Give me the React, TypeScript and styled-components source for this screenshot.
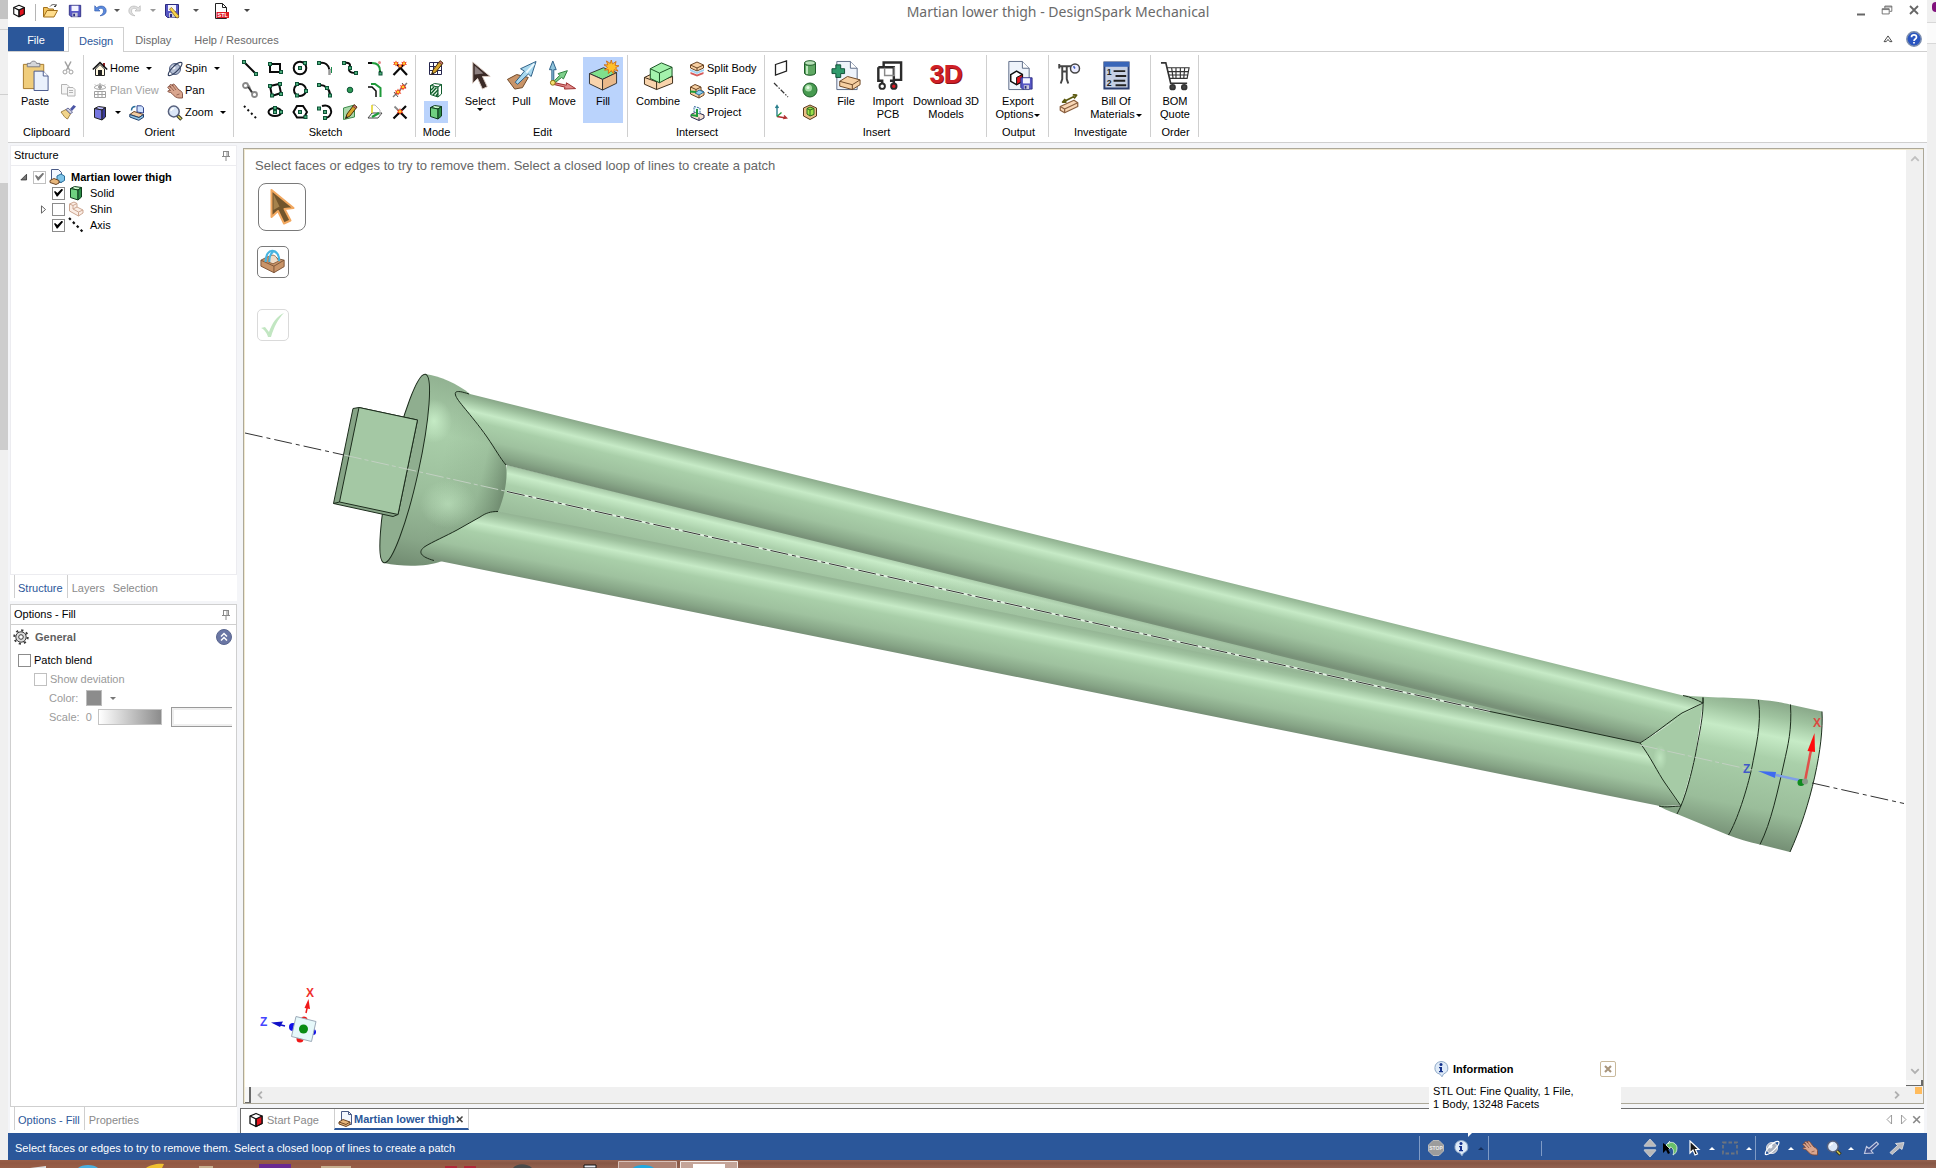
import React, { ReactNode } from "react";
import styled, { createGlobalStyle, css } from "styled-components";

const BLUE = "#2b579a";
const LINE = "#cfcfcf";
const PICK = "#bad3fc";

const Global = createGlobalStyle`
  *, *::before, *::after { box-sizing: border-box; }
  body { margin: 0; background: #f0f0f0; color: #000; font: 11px/13px "Liberation Sans", Arial, sans-serif; }
  button, input { font: inherit; color: inherit; }
  button { margin: 0; padding: 0; border: 0; background: none; white-space: nowrap; }
`;

/* ---------- page frame ---------- */

const Desktop = styled.div`
  display: flex;
  flex-direction: column;
  height: 100vh;
  overflow: hidden;
`;
const Screen = styled.div`
  display: flex;
  flex: 1;
  min-height: 0;
`;
const LeftEdge = styled.div`
  width: 8px;
  background: linear-gradient(#c4c4c4 0 19px, #f0f0f0 19px 29px, #cfcfcf 29px 30px, #f0f0f0 30px 94px, #cfcfcf 94px 95px,
    #f0f0f0 95px 183px, #cdcdcd 183px 450px, #f0f0f0 450px);
`;
const RightEdge = styled.div`
  width: 9px;
  background: linear-gradient(#f0f0f0 0 22px, #d8d8d8 22px 23px, #fbfbfb 23px 43px, #d8d8d8 43px 44px, #f0f0f0 44px);
  &::before {
    content: "";
    display: block;
    width: 4px;
    height: 10px;
    margin: 2px 0 0 5px;
    border-radius: 4px 0 0 4px;
    background: #80107c;
  }
`;
const AppWindow = styled.div`
  display: flex;
  flex-direction: column;
  flex: 1;
  min-width: 0;
  background: #fff;
`;

/* ---------- title bar ---------- */

const TitleBar = styled.header`
  display: flex;
  align-items: flex-start;
  height: 27px;
`;
const QuickAccess = styled.div`
  display: flex;
  align-items: center;
  height: 21px;
  width: 260px;
`;
const Slot = styled.button<{ $w: number }>`
  display: flex;
  flex: none;
  align-items: center;
  justify-content: center;
  width: ${(p) => p.$w}px;
`;
const QuickRule = styled.div`
  width: 1px;
  height: 17px;
  margin: 4px 5px 0 5px;
  background: #b5b5b5;
`;
const Title = styled.h1`
  flex: 1;
  margin: 0;
  padding-top: 2px;
  font: 14px/20px "Noto Sans", "Open Sans", sans-serif;
  text-align: center;
  color: #6a6a6a;
`;
const WindowButtons = styled.div`
  display: flex;
  align-items: center;
  height: 19px;
`;

/* ---------- tabs ---------- */

const TabRow = styled.nav`
  display: flex;
  align-items: stretch;
  height: 25px;
  border-bottom: 1px solid ${LINE};
`;
const FileTab = styled.button`
  width: 56px;
  margin-right: 4px;
  padding-top: 2px;
  background: ${BLUE};
  color: #fff;
`;
const Tab = styled.button<{ $on?: boolean }>`
  padding: 2px 12px 0 11px;
  color: ${(p) => (p.$on ? BLUE : "#6a6a6a")};
  ${(p) =>
    p.$on &&
    css`
      margin-bottom: -1px;
      padding: 2px 10px 0;
      border: 1px solid ${LINE};
      border-bottom: 0;
      background: #fff;
    `}
`;
const Grow = styled.div`
  flex: 1;
`;

/* ---------- ribbon ---------- */

const RibbonBar = styled.div`
  display: flex;
  height: 91px;
  padding: 3px 0 5px;
  border-bottom: 1px solid ${LINE};
`;
const GroupBox = styled.section<{ $w: number }>`
  display: flex;
  flex: none;
  flex-direction: column;
  width: ${(p) => p.$w}px;
  border-right: 1px solid ${LINE};
`;
const GroupBody = styled.div<{ $pad?: number }>`
  display: flex;
  flex: none;
  height: 70px;
  padding: 2px 0 0 ${(p) => p.$pad ?? 0}px;
`;
const GroupName = styled.h2`
  margin: 1px 0 0 2px;
  font: inherit;
  text-align: center;
`;
const BigButton = styled.button<{ $w: number; $on?: boolean }>`
  display: flex;
  flex: none;
  flex-direction: column;
  align-items: center;
  width: ${(p) => p.$w}px;
  height: 66px;
  padding-top: 3px;
  background: ${(p) => (p.$on ? PICK : "transparent")};
  text-align: center;
`;
const BigText = styled.span`
  margin-top: 4px;
`;
const SmallCol = styled.div<{ $w: number }>`
  display: grid;
  grid-auto-rows: 22px;
  align-content: start;
  justify-items: start;
  width: ${(p) => p.$w}px;
`;
const SmallRow = styled.div`
  display: flex;
  align-items: center;
  gap: 6px;
`;
const SmallButton = styled.button<{ $off?: boolean }>`
  display: flex;
  align-items: center;
  gap: 2px;
  height: 22px;
  padding: 1px 1px 0;
  color: ${(p) => (p.$off ? "#a3a3a3" : "#000")};
`;
const IconGrid = styled.div<{ $cols: number; $pitch: number; $row?: number }>`
  display: grid;
  grid-template-columns: repeat(${(p) => p.$cols}, ${(p) => p.$pitch}px);
  grid-auto-rows: ${(p) => p.$row ?? 22}px;
  align-content: start;
`;
const IconButton = styled.button<{ $on?: boolean }>`
  display: flex;
  align-items: center;
  justify-content: center;
  background: ${(p) => (p.$on ? PICK : "transparent")};
`;
const Caret = styled.span<{ $up?: boolean; $tone?: string; $gap?: number }>`
  display: inline-block;
  vertical-align: middle;
  margin-left: ${(p) => p.$gap ?? 0}px;
  border: 3px solid transparent;
  ${(p) => (p.$up ? "border-bottom-color" : "border-top-color")}: ${(p) => p.$tone ?? "#000"};
  ${(p) => (p.$up ? "border-top-width" : "border-bottom-width")}: 0;
`;

/* ---------- body ---------- */

const Body = styled.div`
  display: flex;
  flex: 1;
  min-height: 0;
  background: #f4f5f8;
`;
const Side = styled.aside`
  display: flex;
  flex-direction: column;
  width: 229px;
  padding: 2px 0 0 2px;
  background: #f4f5f8;
`;
const Panel = styled.section<{ $line: string; $grow?: boolean }>`
  display: flex;
  flex: ${(p) => (p.$grow ? "1" : "0 0 430px")};
  flex-direction: column;
  min-height: 0;
  background: #fff;
  border: 1px solid ${(p) => p.$line};
`;
const PanelHead = styled.header<{ $line: string }>`
  display: flex;
  align-items: center;
  justify-content: space-between;
  height: 20px;
  padding: 0 2px 0 3px;
  border-bottom: 1px solid ${(p) => p.$line};
`;
const PanelTitle = styled.h2`
  margin: 0;
  font: inherit;
`;
const PanelTabs = styled.div<{ $gap?: boolean }>`
  display: flex;
  flex: none;
  height: 26px;
  padding: 0 0 3px 4px;
  margin-bottom: ${(p) => (p.$gap ? 3 : 0)}px;
  background: #fff;
`;
const PanelTab = styled.button<{ $on?: boolean }>`
  padding: 3px 4px 0 ${(p) => (p.$on ? 3 : 4)}px;
  color: ${(p) => (p.$on ? BLUE : "#8a8a8a")};
  border: solid ${LINE};
  border-width: 0 ${(p) => (p.$on ? "1px 0 1px" : "0")};
`;
const Tree = styled.ul`
  margin: 3px 0 0;
  padding: 0;
  list-style: none;
`;
const TreeRow = styled.li<{ $indent: number; $bold?: boolean }>`
  display: flex;
  align-items: center;
  height: 16px;
  padding-left: ${(p) => p.$indent}px;
  font-weight: ${(p) => (p.$bold ? 700 : 400)};
`;
const Twisty = styled.span`
  display: flex;
  width: 15px;
`;
const TreeLabel = styled.label`
  display: flex;
  align-items: center;
`;
const TreeName = styled.span`
  margin-left: 6px;
`;
const Check = styled.input.attrs({ type: "checkbox" })<{ $soft?: boolean }>`
  appearance: none;
  flex: none;
  width: 13px;
  height: 13px;
  margin: 0 3px 0 0;
  border: 1px solid ${(p) => (p.$soft ? "#c0c0c0" : "#8c8c8c")};
  background: #fff;
  &:checked::before {
    content: "";
    display: block;
    width: 9px;
    height: 8px;
    margin: 1px;
    background: ${(p) => (p.$soft ? "#777" : "#000")};
    clip-path: polygon(0 40%, 12% 30%, 38% 56%, 88% 0, 100% 20%, 40% 100%, 30% 100%);
  }
`;
const Options = styled.div`
  display: grid;
  grid-template-columns: minmax(0, 1fr);
  gap: 3px;
  padding: 3px 0 0 2px;
  color: #8a8a8a;
`;
const OptionHead = styled.div`
  display: flex;
  align-items: center;
  justify-content: space-between;
  height: 18px;
  padding-right: 4px;
`;
const OptionName = styled.h3`
  display: flex;
  align-items: center;
  gap: 6px;
  margin: 0;
  font: bold 11px/13px "Liberation Sans", Arial, sans-serif;
  color: #5f5f5f;
`;
const OptionRow = styled.label<{ $indent: number; $strong?: boolean }>`
  display: flex;
  align-items: center;
  height: 16px;
  padding-left: ${(p) => p.$indent}px;
  color: ${(p) => (p.$strong ? "#000" : "#9a9a9a")};
`;
const OptionList = styled.div`
  display: grid;
  grid-template-columns: minmax(0, 1fr);
  gap: 3px;
  margin-top: 3px;
`;
const Swatch = styled.button`
  width: 16px;
  height: 16px;
  margin: 0 8px;
  border: 1px solid #bdbdbd;
  background: #8c8c8c;
`;
const Ramp = styled.div`
  flex: none;
  width: 64px;
  height: 16px;
  margin: 0 9px 0 6px;
  border: 1px solid #c4c4c4;
  background: linear-gradient(90deg, #fff, #8c8c8c);
`;
const ScaleBox = styled.input`
  flex: 1;
  min-width: 0;
  height: 20px;
  margin-right: 4px;
  border: 1px solid #9a9a9a;
  border-right: 0;
  box-shadow: inset 2px 2px #efefef, inset 0 -2px #efefef;
  background: #fff;
`;

/* ---------- work area ---------- */

const Work = styled.main`
  display: flex;
  flex: 1;
  flex-direction: column;
  min-width: 0;
  padding: 5px 3px 0 3px;
`;
const Frame = styled.div`
  display: grid;
  flex: 1;
  grid-template: minmax(0, 1fr) 16px / minmax(0, 1fr) 17px;
  min-height: 0;
  margin-left: 3px;
  border: 1px solid #aca899;
  background: #f0f0f0;
  box-shadow: inset 1px 1px #f1e9d0;
`;
const Viewport = styled.div`
  position: relative;
  margin: 1px 0 0 1px;
  padding: 8px 0 0 10px;
  background: #fff;
  overflow: hidden;
`;
const Scene = styled.svg`
  position: absolute;
  inset: 0;
  width: 100%;
  height: 100%;
`;
const Overlay = styled.div`
  position: relative;
  display: flex;
  flex-direction: column;
  align-items: flex-start;
`;
const Hint = styled.p`
  margin: 0 0 10px;
  font-size: 13px;
  line-height: 15px;
  color: #666;
`;
const ToolButton = styled.button<{ $big?: boolean; $faint?: boolean }>`
  display: flex;
  align-items: center;
  justify-content: center;
  width: ${(p) => (p.$big ? 48 : 32)}px;
  height: ${(p) => (p.$big ? 48 : 32)}px;
  margin: 0 0 ${(p) => (p.$big ? 15 : 31)}px ${(p) => (p.$big ? 3 : 2)}px;
  border: 1px solid ${(p) => (p.$faint ? "#dadada" : "#7a7a7a")};
  border-radius: ${(p) => (p.$big ? 8 : 5)}px;
  background: #fff;
`;
const VScroll = styled.div`
  display: flex;
  flex-direction: column;
  align-items: center;
  justify-content: space-between;
  padding: 4px 0 1px;
`;
const HScroll = styled.div`
  display: flex;
  align-items: center;
  justify-content: space-between;
  padding: 0 3px 0 1px;
`;
const ScrollEnd = styled.div<{ $row?: boolean }>`
  display: flex;
  flex-direction: ${(p) => (p.$row ? "row" : "column")};
  align-items: center;
  gap: 3px;
`;
const Nub = styled.div<{ $tall?: boolean }>`
  width: ${(p) => (p.$tall ? 6 : 17)}px;
  height: ${(p) => (p.$tall ? 16 : 6)}px;
  border: solid #696969;
  border-width: 0 2px 1px 0;
  background: #f7f7f7;
`;
const Corner = styled.div`
  display: flex;
  justify-content: flex-end;
  padding: 0 1px;
  &::before {
    content: "";
    width: 7px;
    height: 7px;
    background: #ffbb5c;
  }
`;
const DocTabs = styled.div`
  display: flex;
  align-items: stretch;
  height: 25px;
  margin: 4px 0 0;
  padding-bottom: 3px;
  border: solid #6e6e6e;
  border-width: 1px 0 0 1px;
  background: #fff;
`;
const DocTab = styled.button<{ $on?: boolean; $w: number }>`
  display: flex;
  align-items: center;
  gap: ${(p) => (p.$on ? 0 : 3)}px;
  width: ${(p) => p.$w}px;
  padding: 1px 0 0 ${(p) => (p.$on ? 3 : 7)}px;
  color: ${(p) => (p.$on ? BLUE : "#8a8a8a")};
  font-weight: ${(p) => (p.$on ? 700 : 400)};
  ${(p) =>
    p.$on &&
    css`
      border: 1px solid ${LINE};
      border-width: 0 1px 2px;
      border-bottom-color: ${BLUE};
    `}
`;

/* ---------- status bar ---------- */

const StatusBar = styled.footer`
  position: relative;
  display: flex;
  align-items: center;
  height: 27px;
  padding: 3px 16px 0 7px;
  background: ${BLUE};
  color: #fff;
`;
const StatusText = styled.span`
  flex: 1;
  padding-top: 1px;
`;
const StatusRule = styled.div<{ $short?: boolean; $before?: number; $after?: number }>`
  width: 1px;
  height: ${(p) => (p.$short ? 15 : 24)}px;
  margin: 0 ${(p) => p.$after ?? 1}px 0 ${(p) => p.$before ?? 0}px;
  background: #7f9bc6;
`;
const Balloon = styled.div`
  position: absolute;
  right: 306px;
  bottom: 27px;
  width: 192px;
  height: 78px;
  padding: 4px 5px 0 4px;
  background: #fff;
  color: #000;
`;
const BalloonTail = styled.div`
  position: absolute;
  left: 39px;
  bottom: -4px;
  border: 4px solid transparent;
  border-width: 4px 4px 0 0;
  border-top-color: #fff;
`;
const BalloonHead = styled.div`
  display: flex;
  align-items: center;
  gap: 4px;
  height: 20px;
  margin-bottom: 6px;
`;
const CloseBox = styled.button`
  display: flex;
  align-items: center;
  justify-content: center;
  width: 16px;
  height: 16px;
  margin-left: auto;
  border: 1px solid #c9b99c;
  border-radius: 2px;
`;
const BalloonText = styled.p`
  margin: 0;
`;
const Taskbar = styled.div`
  flex: none;
  height: 8px;
  background: linear-gradient(#94614f, #865644 40%, #946250);
`;

/* ---------- icons ---------- */

const Svg = styled.svg`
  display: block;
  flex: none;
  fill: none;
  stroke-linecap: butt;
`;
const Icon = ({ s = 16, box = 16, children }: { s?: number; box?: number; children: ReactNode }) => (
  <Svg width={s} height={s} viewBox={`0 0 ${box} ${box}`} aria-hidden="true">
    {children}
  </Svg>
);
const Node = ({ x, y }: { x: number; y: number }) => (
  <rect x={x} y={y} width="3" height="3" fill="#4fae7c" stroke="#0c5236" />
);
const Ink = ({ d, c = "#0a0a0a", w = 2 }: { d: string; c?: string; w?: number }) => <path d={d} stroke={c} strokeWidth={w} />;
const Burst = ({ x, y, r }: { x: number; y: number; r: number }) => (
  <g transform={`translate(${x} ${y}) scale(${r / 5})`}>
    <path d="M0-5 1.500-2 4.500-3 3 0l2 2.500-3.400-.3L0 5l-1.600-2.800L-5 2.500-3 0-4.500-3l3 1z" fill="#f0391b" />
    <circle r="2" fill="#ffd428" />
  </g>
);
const Pencil = () => (
  <g>
    <path d="M3.500 14.500 5 10 12 .800 15 3 8 12z" fill="#d8a72c" stroke="#4c300c" />
    <path d="m12 .800 3 2.200-1.200 1.600-3-2.200z" fill="#c87070" stroke="#4c300c" strokeWidth=".6" />
    <path d="m3.500 14.500 .8-2.600 1.700 1.300z" fill="#222" />
  </g>
);
const Block = ({ t, l, r, e = "#222" }: { t: string; l: string; r: string; e?: string }) => (
  <g stroke={e} strokeLinejoin="round">
    <path d="M2.500 3.500 6.500 1.500 13.500 2.500 10 5z" fill={t} />
    <path d="M2.500 3.500 10 5v10L2.500 12.500z" fill={l} />
    <path d="M10 5 13.500 2.500v9.500L10 15z" fill={r} />
  </g>
);
const Logo = () => (
  <g stroke="#111" strokeWidth="1.300" strokeLinejoin="round">
    <path d="M8 1.500 14 4v7.500l-6 3-6-3V4z" fill="#fff" />
    <path d="m8 7 6-3v7.500l-6 3z" fill="#e1131d" />
    <path d="m2 4 6 3v7" />
  </g>
);
const Planet = ({ dim }: { dim?: boolean }) => (
  <g>
    <circle cx="8" cy="8" r="5.500" fill={dim ? "#a9b0bd" : "#b3bed4"} stroke={dim ? "#e4e4e8" : "#525f80"} />
    <circle cx="6.500" cy="6.500" r="2" fill="#eef2fa" />
    <path
      d="M1.500 14.500C0 11 10 .500 14.500 1.500 17 4 6 15.500 1.500 14.500z"
      stroke={dim ? "#fff" : "#33405f"}
      strokeWidth="1.200"
    />
  </g>
);
const Hand = () => (
  <g>
    <path
      d="M.800 4.500C1 3 2.500 3 4 4.500L2.500 2.500C3 1 4.500 1.500 6 3L5.500 1.500C6.500.500 8 1.500 9.500 4L12 7c1.500.5 3 1.500 3.500 3.500V15H12c-2 0-5-1.500-7-4.500L3.500 9.500C2 9.500.500 9 1 7.800l2.500-.3z"
      fill="#d9a58e"
      stroke="#7d4a3a"
      strokeWidth=".9"
    />
    <path d="M4 4.500 7 8M6 3l3 4M9.500 12l3-1" stroke="#7d4a3a" strokeWidth=".7" />
  </g>
);
const Lens = () => (
  <g>
    <path d="m10 10 4.500 4.500" stroke="#3c3c28" strokeWidth="3.500" />
    <path d="m11 11 3 3" stroke="#d8cd4e" strokeWidth="1.400" />
    <circle cx="6.800" cy="6.500" r="5.400" fill="#dbe7f7" stroke="#56607c" strokeWidth="1.500" />
    <path d="M4 6a3 3 0 0 1 3-2.500" stroke="#fff" strokeWidth="1.500" />
  </g>
);
const Disk = () => (
  <g>
    <path d="M1.500 1.500h13v13h-11l-2-2z" fill="#5757c4" stroke="#2a2a80" />
    <path d="M4 2h8v6H4z" fill="#f4f4ff" />
    <path d="M5 10h6v4.500H5z" fill="#c9c9d8" />
    <path d="M6 11h2v3H6z" fill="#2a2a80" />
  </g>
);
const Page = () => (
  <g>
    <path d="M6 1.500h14l7 7v22H6z" fill="#eef3fb" stroke="#5d6b86" />
    <path d="M20 1.500v7h7" fill="#fff" stroke="#5d6b86" />
  </g>
);
const InfoMark = () => (
  <g>
    <path d="M8 .500A7 6.500 0 0 1 10.500 13L9 15.800l-2-2.600A7 6.500 0 0 1 8 .500z" fill="#dfebf8" stroke="#8fa9c8" />
    <circle cx="8" cy="3.500" r="1.500" fill="#15328c" />
    <path d="M6 6h3v4h1v1.200H6V10h1V7.200H6z" fill="#15328c" />
  </g>
);
const iconType = { fontFamily: "Liberation Sans, Arial, sans-serif", fontWeight: 700 };

const glyph: Record<string, ReactNode> = {
  logo: <Logo />,
  open: (
    <g stroke="#a2701c">
      <path d="M1.500 14V4.500h4l1 1.500h5v2" fill="#f3c45c" />
      <path d="M1.500 14 5 7.500h10.500L12 14z" fill="#ffdd8c" />
      <path d="M8 3.500C10 1 13 1 14 3m0 0V1m0 2.500h-2" stroke="#444" />
    </g>
  ),
  save: <Disk />,
  undo: (
    <path d="M2 2v6h6L6 6c3-2 6-1 6 2s-2 4-4 5.500c5-.5 7.500-3 7-6.500C14.500 2 8 1 4.300 4.300z" fill="#5b8ade" stroke="#2c56a8" strokeWidth=".7" />
  ),
  redo: (
    <path d="M14 2v6H8l2-2C7 4 4 5 4 8s2 4 4 5.500C3 13 .5 10.500 1 7 1.500 2 8 1 11.700 4.300z" fill="#e0e0e0" stroke="#b0b0b0" strokeWidth=".7" />
  ),
  saveAs: (
    <g>
      <Disk />
      <path d="m5.500 6 2-1.500L15 13l-1 2-2-.5z" fill="#f7d24a" stroke="#8a6410" strokeWidth=".7" />
    </g>
  ),
  stl: (
    <g>
      <path d="M2.500.500h7l4 4v11h-11z" fill="#fff" stroke="#222" />
      <path d="M9.500.500v4h4" stroke="#222" />
      <path d="M3.500 9H16v6H3.500z" fill="#e01b24" />
      <text x="9.700" y="14" textAnchor="middle" fontSize="5.500" fill="#fff" {...iconType}>STL</text>
    </g>
  ),
  cut: (
    <g stroke="#a0a0a0">
      <path d="M5 1.500 9.500 10M11 1.500 6.500 10" strokeWidth="1.500" />
      <circle cx="5" cy="12" r="2" />
      <circle cx="11" cy="12" r="2" />
    </g>
  ),
  copy: (
    <g stroke="#b4b4b4" fill="#f5f5f5">
      <path d="M1.500 2.500H7l2 2V12H1.500z" />
      <path d="M7.500 5.500H13l2 2v6.500H7.500z" />
      <path d="M9 8.500h4M9 10.500h4" />
    </g>
  ),
  brush: (
    <g>
      <path d="M1 8 6 5.500 10.500 10 7.500 15C5 14 4 12 1 8z" fill="#f1d48a" stroke="#8b6b2c" strokeWidth=".8" />
      <path d="M6 5.500 8 4l4.500 4-2 2z" fill="#cfcfe0" stroke="#444a80" strokeWidth=".8" />
      <path d="m10 5 3.500-4L16 2.500 12 7z" fill="#4b55a5" />
    </g>
  ),
  home: (
    <g>
      <path d="M11 2h2v4h-2z" fill="#8c1f1f" />
      <path d="M3.500 8v6.500h9V8L8 3.500z" fill="#fff8e0" stroke="#222" />
      <path d="M.800 8.500 8 1.500l7.200 7" stroke="#111" strokeWidth="1.600" />
      <path d="M6 9h4v5.500H6z" fill="#222" />
    </g>
  ),
  plan: (
    <g stroke="#a0a0a0">
      <path d="M2 4.500C5 1 11 1 14 4.500 11 7 5 7 2 4.500zM2.500 8.500h11v6h-11zM2.500 11.500h11M6 8.500v6M10 8.500v6" />
      <circle cx="8" cy="4" r="1.500" fill="#a0a0a0" />
      <path d="M3 1.500l1 1M8 0v1.500M13 1.500l-1 1" />
    </g>
  ),
  blueBlock: <Block t="#b9b9ff" l="#7676e0" r="#3c3c9c" />,
  greenBlock: <Block t="#c9f7c9" l="#6fd080" r="#2c8c46" e="#0f3d1c" />,
  hatchBlock: (
    <g>
      <Block t="#fff" l="#e8fbe8" r="#fff" e="#0f5d2c" />
      <path d="m3 8 3-3M3 11.500 8.500 5.500M5 13l5-5M8 14l2-2.500" stroke="#0f5d2c" strokeWidth="1.400" />
    </g>
  ),
  ghostStep: (
    <g stroke="#cda792" fill="#fbeee6" strokeLinejoin="round">
      <path d="M1.500 3 6 1l3 1.500V6l6 3v3l-4.500 3L1.500 10z" />
      <path d="M1.500 3 5 4.500v3.500l5.500 3V15M5 4.500 9 2.500M5 8l4-2M10.500 11 15 9" />
    </g>
  ),
  axisDots: <path d="m1 1 14 14" stroke="#111" strokeWidth="2.200" strokeDasharray="2.500 3" />,
  dotLine: <path d="m2 2 13 13" stroke="#111" strokeWidth="2" strokeDasharray="2 3" />,
  axisThin: <path d="m1 1 14 14" stroke="#333" strokeWidth="1.200" strokeDasharray="5 1.500 1.500 1.500" />,
  snap: (
    <g strokeLinejoin="round">
      <path d="M.800 9.500 5 6.500l9.500 3-4.500 3z" fill="#f0cda4" stroke="#6b4524" />
      <path d="M.800 9.500v2.500l9 3.300 4.700-3V9.500L10 12.500z" fill="#8fc4e4" stroke="#1f3f6c" />
      <path d="M8 .800h4.500l2 2V8L8 7z" fill="#cfe2ff" stroke="#34468c" />
      <path d="M2.500 5.500c0-3 2-4 4-4" stroke="#2a6f9c" strokeWidth="1.500" />
    </g>
  ),
  spin: <Planet />,
  hand: <Hand />,
  lens: <Lens />,

  line: (<g><Ink d="m3 3 10 10" /><Node x={.5} y={.5} /><Node x={12.5} y={12.5} /></g>),
  rect: (<g><Ink d="M3 4h10v8H3z" /><Node x={1.5} y={2.5} /><Node x={12.5} y={10.5} /></g>),
  circle: (<g><circle cx="8" cy="8" r="6.300" stroke="#0a0a0a" strokeWidth="2" /><Node x={6.5} y={6.5} /><Node x={11.5} y={1.5} /></g>),
  tanArc: (<g><Ink d="M3 3c5-1 9 2 9.500 7" /><path d="M12.500 9v6" stroke="#9a9a9a" strokeWidth="2.500" /><path d="M14.500 7v6" stroke="#1a8a4a" /><Node x={.5} y={1.5} /></g>),
  spline: (<g><Ink d="M2 3c5-1 7 1 5.500 4S7 13 14 13" /><Node x={.5} y={1.5} /><Node x={6.5} y={6.5} /><Node x={12.5} y={11.5} /></g>),
  fillet: (<g><Ink d="M1 3h4M13 10v5" /><Ink d="M5 3c5 0 8 3 8 8" c="#1f9a3a" /><circle cx="12.500" cy="2.500" r="1.500" fill="#e58a8a" /><Node x={12} y={12} /></g>),
  trim: (<g><Ink d="M1.500 15 13 3M4 3l11 12" w={2.200} /><Burst x={4} y={3.500} r={3} /><Burst x={12} y={3.500} r={3} /><Burst x={8} y={6} r={2.500} /></g>),
  chain: (<g stroke="#8a8a8a" strokeWidth="1.800"><circle cx="3.500" cy="3.500" r="2.500" /><circle cx="12.500" cy="12.500" r="2.500" /><path d="M6 3c3 2 1 6 4.500 8" strokeWidth="2" /><path d="M6 5l4 5" stroke="#333" /></g>),
  rect3: (<g><Ink d="m3 4 9-2 2 9-9 3z" /><Node x={1.5} y={2.5} /><Node x={11.5} y={.5} /><Node x={12.5} y={10.5} /><Node x={3.5} y={12} /></g>),
  circle3: (<g><circle cx="8" cy="8" r="6" stroke="#0a0a0a" strokeWidth="2" /><Node x={3.5} y={.5} /><Node x={12.5} y={7.5} /><Node x={3.5} y={12} /></g>),
  arc3: (<g><Ink d="M3 3c5 0 10 4 10 10" /><Node x={.5} y={1.5} /><Node x={8.5} y={4.500} /><Node x={11.500} y={12} /></g>),
  dot: <circle cx="8" cy="8" r="2.800" fill="#2f9a55" stroke="#0c5236" />,
  offset: (<g><Ink d="M1 5h4l4 4v6" w={1.5} /><Ink d="M4 2h4l5.500 4v9" c="#1f9a3a" /></g>),
  split: (<g><Ink d="M1 15 15 1" c="#777" w={1.5} /><Ink d="m2 10 4 5M10 1l4 5" c="#555" w={1} /><Burst x={6} y={10} r={3.400} /><Burst x={11} y={5} r={3.400} /></g>),
  ellipse: (<g><ellipse cx="8" cy="8" rx="6.500" ry="4" stroke="#0a0a0a" strokeWidth="2" /><Node x={6.500} y={2.500} /><Node x={6.500} y={6.500} /><Node x={12.500} y={6.500} /></g>),
  polygon: (<g><Ink d="M5 2h6l4 6-3 5.500H5L1.500 8z" /><Node x={6.500} y={6.500} /><Node x={12} y={11.500} /></g>),
  sweep: (<g><Ink d="M5 2c6-2 10 2 9 7-1 3-3 5-6 5" /><Node x={.5} y={3} /><Node x={6.500} y={6.500} /><Node x={6.500} y={12.500} /></g>),
  planePen: (<g><path d="M1.500 4l11-3v12l-11 2.500z" fill="#a9d8a9" stroke="#3f8a4c" /><Pencil /></g>),
  project: (<g><path d="M1 14 5 9h10l-4 5z" stroke="#444" /><path d="M5 1h3l5 5v5" stroke="#b8b8b8" /><path d="M5 1v8" stroke="#e0d020" strokeWidth="1.500" /><path d="m5 13 7-4" stroke="#1f9a3a" strokeWidth="2.500" /></g>),
  cross: (<g><Ink d="m8 8 6.500 6.500M1.500 14.500 14 2" w={2.200} /><Ink d="m2.500 2.500 5 5" c="#888" w={1.800} /><Burst x={8} y={7.500} r={3.400} /></g>),

  gridPen: (<g><path d="M1.500 2.500h12v12h-12zM1.500 6.500h12M1.500 10.500h12M5.500 2.500v12M9.500 2.500v12" stroke="#26264e" /><Pencil /></g>),

  splitBody: (
    <g strokeLinejoin="round">
      <path d="M1.500 4 8 1l6.500 3v3L8 10 1.500 7z" fill="#f6cfa2" stroke="#6b4524" />
      <path d="m1.500 4 6.500 3 6.500-3M8 7v3" stroke="#6b4524" />
      <path d="m1 8 7 3 7-3v2l-7 3-7-3z" fill="#9fd3f2" />
      <path d="m1.500 11 6.500 2.500 6.500-2.500v2L8 15.500 1.500 13z" fill="#d65a5a" />
    </g>
  ),
  splitFace: (
    <g strokeLinejoin="round" stroke="#6b4524">
      <path d="M1.500 4 6 1.500 12 4v3l3 2v3l-5 3-8.500-4z" fill="#f6cfa2" />
      <path d="m6 10 4-3 5 2-5 3z" fill="#8fd0f0" stroke="#2a6f9c" />
      <path d="M1.500 4 7 6.500 12 4M7 6.500V9M10 12v3" />
      <path d="M1 8.500 7 9" stroke="#1f9a3a" strokeWidth="2" />
    </g>
  ),
  projectTo: (
    <g strokeLinejoin="round">
      <path d="M2 9.500 7 7l8 3v3l-5 2.500-8-3.500z" fill="#f6e0d0" stroke="#2a2a50" />
      <path d="M5 1.500 11 3v6L5 7z" fill="#e8f6ff" stroke="#3c6c9c" strokeDasharray="2 1" />
      <path d="M8 4v8M2 10l7 1" stroke="#1f9a3a" strokeWidth="2" />
      <path d="M10 12.500V15" stroke="#2a2a50" />
    </g>
  ),
  plane: <path d="M2.500 4.500 13.500 1v10l-11 4z" fill="#fff" stroke="#222" strokeWidth="1.300" />,
  cylinder: (
    <g stroke="#1d5c28">
      <path d="M2.500 3v10c0 3 11 3 11 0V3z" fill="#5fa863" />
      <ellipse cx="8" cy="3" rx="5.500" ry="2.300" fill="#b9e2b9" />
      <path d="M5 6v8" stroke="#bfe8bf" strokeWidth="2" />
    </g>
  ),
  sphere: (
    <g>
      <circle cx="8" cy="8" r="7" fill="#479a50" stroke="#1d5c28" />
      <circle cx="6.500" cy="6" r="3.500" fill="#a5dba5" />
      <circle cx="6" cy="5.500" r="1.500" fill="#e4fae4" />
    </g>
  ),
  originAxes: (
    <g strokeWidth="1.400">
      <path d="M4 12.500V2M2.500 4 4 1.500 5.500 4" stroke="#2a7f8c" />
      <path d="M4 12.500l9 1.500M11 11.500l2.500 2.500-3.500.5" stroke="#b03030" />
      <path d="m4 12.500 4.500-4" stroke="#1f9a3a" />
    </g>
  ),
  shell: (
    <g strokeLinejoin="round">
      <path d="M8 1 14.500 4v8L8 15.500 1.500 12V4z" fill="#e9be86" stroke="#5a3a1c" />
      <path d="M5 4.500 8 3l4 1.500v6L8 12 5 10z" fill="#9be04a" stroke="#2c6a1c" />
      <path d="M8 6v6M5 4.500 8 6l4-1.500" stroke="#2c6a1c" />
    </g>
  ),
  caliper: (
    <g stroke="#444">
      <path d="M1 3.500h10M3.500 3v9l-1 3M6.500 3v9l1 3M1.500 2v3M3.500 7h3" strokeWidth="1.300" />
      <circle cx="12" cy="5" r="3" fill="#eef" />
      <path d="m12 5-1-1.500" stroke="#3c5cc0" />
    </g>
  ),
  measure: (
    <g strokeLinejoin="round">
      <path d="M1 10 12 5l3 2v3L4.500 15 1 13z" fill="#f9d6b4" stroke="#8a6040" />
      <path d="M1 10l3.500 2L15 7M4.500 12v3" stroke="#8a6040" />
      <path d="m4 6 8-4M11 .500 14 1l-2 2.500M5 4 3 6.500h3" stroke="#5c5a10" strokeWidth="1.500" />
    </g>
  ),
  doc: (
    <g>
      <path d="M3.500.500h7l3 3v10h-10z" fill="#f3f7ff" stroke="#4a5a86" />
      <path d="M10.500.500v3h3" stroke="#4a5a86" />
      <path d="M1 11 5 8.500l7 2.500v2.500l-4 2-7-2.500z" fill="#e8b77c" stroke="#6b4524" strokeLinejoin="round" />
      <path d="m1 11 7 2.500 4-2.500" stroke="#6b4524" />
    </g>
  ),
  docTree: (
    <g>
      <path d="M2.500.500h7l3 3v10h-10z" fill="#f3f7ff" stroke="#4a5a86" />
      <path d="M8 7l4-2 3.500 2v4.500L12 13.500 8 11.500z" fill="#7fc4e8" stroke="#2a6f9c" />
      <path d="M1 11.500 5 9.500l5 2V14l-3 1.500-6-2z" fill="#e8b77c" stroke="#6b4524" strokeLinejoin="round" />
    </g>
  ),
  gear: (
    <g stroke="#3c3c3c">
      <circle cx="8" cy="8" r="6.700" strokeWidth="2" strokeDasharray="2.200 3.060" />
      <circle cx="8" cy="8" r="5.200" fill="#dcdcdc" />
      <circle cx="8" cy="8" r="2.300" fill="#fff" />
    </g>
  ),
  collapse: (
    <g>
      <circle cx="8" cy="8" r="7.500" fill="#6a76a4" stroke="#5a668f" />
      <path d="m5 7.500 3-3 3 3M5 11.500l3-3 3 3" stroke="#fff" strokeWidth="1.500" />
    </g>
  ),
  pin: <path d="M5.500 3v5M10.500 3v5M5.500 3.500h5M9 3v5M4 8.500h8M8 9v4" stroke="#8a8a8a" />,
  help: (
    <g>
      <circle cx="8" cy="8" r="7.200" fill="#2a55c0" stroke="#7d8fae" strokeWidth="1.500" />
      <path d="M5.500 6.200c0-3 5-3 5 0 0 1.800-2.500 1.800-2.500 3.800M8 11v1.500" stroke="#fff" strokeWidth="1.700" />
    </g>
  ),
  minimise: <path d="M4 12.500h8" stroke="#666" strokeWidth="2" />,
  restore: <path d="M2.500 6.500h8v6h-8zM2.500 7.500h8M5.500 6V3.500h8v6H11M5.500 4.500h8" stroke="#666" />,
  close: <path d="m4 4 8 8M12 4l-8 8" stroke="#666" strokeWidth="1.800" />,
  fold: <path d="M3.500 11 8 4.500l4.500 6.500H10L8 8.500 6 11z" stroke="#333" />,
  closeSmall: <path d="m3 3 9 9M12 3l-9 9" stroke="#8a8a8a" strokeWidth="2.200" />,
  closeTab: <path d="m3 4 9 9M12 4l-9 9" stroke="#444" strokeWidth="2.400" />,
  closeTan: <path d="m4 4 8 8M12 4l-8 8" stroke="#a8957c" strokeWidth="2.800" />,
  left: <path d="m10.500 2.500-5.500 5.500 5.500 5.500z" stroke="#888" />,
  right: <path d="m5.500 2.500 5.500 5.500-5.500 5.500z" stroke="#888" />,
  chevL: <path d="M10.500 3.500 6 8l4.500 4.500" stroke="#b0b0b0" strokeWidth="2.400" />,
  chevR: <path d="m5.500 3.500 4.500 4.500-4.500 4.500" stroke="#b0b0b0" strokeWidth="2.400" />,
  chevU: <path d="m3 10.500 5-5 5 5" stroke="#c0c0c0" strokeWidth="2.400" />,
  chevD: <path d="m3 5.500 5 5 5-5" stroke="#b0b0b0" strokeWidth="2.400" />,
  twistOpen: <path d="M10.500 4v7h-7z" fill="#777" stroke="#333" />,
  twistShut: <path d="m5.500 3.500 5 4.500-5 4.500z" stroke="#444" />,
  info: <InfoMark />,
  stop: (
    <g>
      <path d="M5 .500h6L15.500 5v6L11 15.500H5L.500 11V5z" fill="#9c9c9c" stroke="#b8b8b8" />
      <text x="8" y="10" textAnchor="middle" fontSize="5" fill="#eee" {...iconType}>STOP</text>
    </g>
  ),
  spinner: (
    <g fill="#b9b9b9" stroke="#e6e6e6" strokeWidth=".6">
      <path d="M8 0l5 5.500v1H3v-1zM8 16l5-5.500v-1H3v1z" />
    </g>
  ),
  turn: (
    <g>
      <path d="M1 3v10l3-3 2 4 2-1-2-4h4z" fill="#000" />
      <path d="M6 4C10 0 15 4 15 8s-2 6-4 7c1-3 1-7-3-8v2L4 5l4-4z" fill="#6ac06a" stroke="#e4f4e4" strokeWidth=".8" />
    </g>
  ),
  cursor: <path d="M4 1v12l3-3 2 5 2.500-1-2-4.500H13z" fill="#1a1a1a" stroke="#fff" strokeWidth="1.200" />,
  marquee: <path d="M1 2.500h14v11H1z" stroke="#6c747f" strokeWidth="1.800" strokeDasharray="3.500 2" />,
  planetDim: <Planet dim />,
  arrowSW: (
    <path d="M1.500 13.500 3.500 6.500 6 8.500 13.500 2l2 2L8 10.800 10 13z" fill="#3c5290" stroke="#c4cce4" strokeWidth="1.100" />
  ),
  arrowNE: (
    <path d="M15 2.500 13 9.500 10.800 7.800 3 14.500l-2-2L8.500 5.500 6.500 3.500z" fill="#b9b9bd" stroke="#e8e8e8" strokeWidth=".8" />
  ),

  paste: (
    <g>
      <path d="M3.500 4.500h21v25h-21z" fill="#f0cd7c" stroke="#a57a2c" />
      <path d="M7.500 7V3.500H11c0-3 6-3 6 0h3.500V7z" fill="#d4d6da" stroke="#7c7c84" />
      <path d="M14.500 11.500H24l5 5v15H14.500z" fill="#eaf1fc" stroke="#48598c" />
      <path d="M24 11.500v5h5" fill="#fff" stroke="#48598c" />
    </g>
  ),
  select: (
    <g>
      <path d="M8 2v22l5-5 5 11 5-2.500L18 17h8z" fill="#3a2a26" stroke="#d8c8c0" />
      <path d="M10 6v9l9-1z" fill="#8d8080" />
    </g>
  ),
  pull: (
    <g strokeLinejoin="round">
      <path d="M1.500 20 11 15l12 3-6 10.500L9 30z" fill="#c99468" stroke="#6b4524" />
      <path d="M31 1.500 26 17l-3-2.500L12 25l-2.500-2L19 11.500l-4-2.500z" fill="#a9d8ee" stroke="#2c5f86" />
      <path d="M29 4 21 13" stroke="#eefaff" strokeWidth="2" />
    </g>
  ),
  move: (
    <g strokeLinejoin="round">
      <path d="M5 22V10H2.500L6 1l3.500 9H7v12z" fill="#8fc4dc" stroke="#2c5f86" />
      <path d="m7 22 6-6-1.500-2L21 11l-4 8.500-2-1.500L9 23z" fill="#7fd08c" stroke="#2c7f3c" />
      <path d="m6 23 14 3v-2.500l9.500 6-11.500.5.500-2L6 25z" fill="#e08a8a" stroke="#9c2c2c" />
      <circle cx="6" cy="23.500" r="2.500" fill="#f4e070" stroke="#8a6f10" />
    </g>
  ),
  fill: (
    <g stroke="#333" strokeLinejoin="round">
      <path d="M1.500 14 16 8l13.500 5L15 20z" fill="#7fe08c" />
      <path d="M1.500 14 15 20v11L1.500 24.500z" fill="#f9d4ac" />
      <path d="M15 20l14.500-7v11L15 31z" fill="#eab98a" />
      <path d="M24 0l1.300 4L29 1.500 28 5.500l4 .5-3.500 2L31 11.500 27 10l-.5 4.500L24 11l-3 3v-4l-4 .5 3-3L16.500 5l4 0L19 1l4 2.500z" fill="#ffc02c" stroke="#c8600c" strokeWidth=".8" />
    </g>
  ),
  combine: (
    <g stroke="#3b2a18" strokeLinejoin="round">
      <path d="M1.500 18 12 13l18.500 4v7L14 30.500 1.500 25z" fill="#f9d4ac" />
      <path d="M1.500 18 14 22.500v8M14 22.500 30.500 17" />
      <path d="M7.500 9 19 3l11 4.500v9L17 23.500 7.500 19z" fill="#a4f2ac" stroke="#174f20" />
      <path d="M7.500 9 17 13.500v10M17 13.500 30 7.500" stroke="#174f20" />
    </g>
  ),
  insertFile: (
    <g>
      <Page />
      <path d="M5 5h5v4h4v5h-4v4H5v-4H1V9h4z" fill="#2f9a6c" stroke="#0f4f38" />
      <path d="M9 22 17 17l13 3.500v5L22 30.500 9 27z" fill="#f6cfa2" stroke="#6b4524" strokeLinejoin="round" />
      <path d="m9 22 13 3.500 8-5M22 25.500v5" stroke="#6b4524" />
    </g>
  ),
  pcb: (
    <g stroke="#2b2b2b" strokeWidth="2.500">
      <path d="M11 7V2.500h18v18H22M5.500 7.500h16v14h-4M5.500 7.500v14h4v3.500M21.500 21.500V25" />
      <path d="M12 8v8h10V7" stroke="#8a8a8a" strokeWidth="1.500" />
      <circle cx="9.500" cy="27" r="2.800" fill="#fff" strokeWidth="2" />
      <circle cx="21.500" cy="27" r="2.800" fill="#e01b24" strokeWidth="2" />
    </g>
  ),
  exportOut: (
    <g>
      <Page />
      <path d="m8 15 6-3.500 6 3.500v7l-6 3.500-6-3.500z" fill="#fff" stroke="#111" strokeWidth="1.500" />
      <path d="m14 18 6-3v7l-6 3.500z" fill="#e1131d" stroke="#111" />
      <g transform="translate(17 17) scale(.9)"><Disk /></g>
    </g>
  ),
  bill: (
    <g>
      <path d="M3.500 2.500h25v27h-25z" fill="#c6d0e4" stroke="#2c3f70" strokeWidth="2" />
      <path d="M3 2h26v5H3z" fill="#3a66b8" />
      <path d="M13 11.500h12M15 16.500h11M13 21.500h12M15 26h11" stroke="#222" strokeWidth="2" />
      <text x="6" y="15" fontSize="9" fill="#222" {...iconType}>1</text>
      <text x="6" y="27" fontSize="9" fill="#222" {...iconType}>2</text>
    </g>
  ),
  cart: (
    <g stroke="#333" strokeWidth="1.700">
      <path d="M1 3h5l5 21h17" />
      <path d="M7 8h23l-2 11H10M8 12h21M9 15.500h20M12 8l1.500 11M16.500 8v11M21 8v11M25.500 8 24.500 19" strokeWidth="1.200" />
      <circle cx="13" cy="28" r="2.500" fill="#444" />
      <circle cx="25" cy="28" r="2.500" fill="#444" />
    </g>
  ),
  bigCursor: (
    <g strokeLinejoin="round">
      <path d="M8.500 2v27l6.500-6 6 12.500 6.500-3-6-11.500 9-1z" fill="#72552c" stroke="#f2a860" strokeWidth="2" />
      <path d="M10.500 6v16l6-3.500z" fill="#a5824c" />
    </g>
  ),
  guide: (
    <g strokeLinejoin="round">
      <path d="M1 12 9 8l17 4v7l-11 6.500L1 18.500z" fill="#c99468" stroke="#7a5236" />
      <path d="M1 12l14 6.500L26 12M15 18.500v7" stroke="#7a5236" />
      <path d="M9 14C9 6 16 3 20 13l-6 3z" fill="#f0dcc8" stroke="#8a6040" />
      <path d="M6 14C6 5 10 2 13 2c5 0 8 5 7.500 11M10 14c0-5 1-9 4-11" stroke="#48b4e0" strokeWidth="2.200" />
    </g>
  ),
  tick: <path d="M2 17l4-1 4 5C13 12 18 5 25 2c-6 6-10 14-13 24H9C8 22 5 18 2 17z" fill="#c2e6c2" />,
};

const G = ({ n, s }: { n: string; s?: number }) => (
  <Icon s={s} box={16}>
    {glyph[n]}
  </Icon>
);
const G32 = ({ n }: { n: string }) => (
  <Icon s={31} box={32}>
    {glyph[n]}
  </Icon>
);
const ThreeD = styled.strong`
  height: 31px;
  font: 900 26px/28px "Liberation Sans", Arial, sans-serif;
  color: #cf1f26;
  text-shadow: 1px 1px #8c1015;
`;

/* ---------- ribbon parts ---------- */

const Group = ({ name, w, pad, children }: { name: string; w: number; pad?: number; children: ReactNode }) => (
  <GroupBox $w={w} aria-label={name}>
    <GroupBody $pad={pad}>{children}</GroupBody>
    <GroupName>{name}</GroupName>
  </GroupBox>
);

const sketchTools = [
  "line", "rect", "circle", "tanArc", "spline", "fillet", "trim",
  "chain", "rect3", "circle3", "arc3", "dot", "offset", "split",
  "dotLine", "ellipse", "polygon", "sweep", "planePen", "project", "cross",
];
const insertTools = ["plane", "cylinder", "axisThin", "sphere", "originAxes", "shell"];

const Ribbon = () => (
  <RibbonBar>
    <Group name="Clipboard" w={76} pad={7}>
      <BigButton $w={40}>
        <G32 n="paste" />
        <BigText>Paste</BigText>
      </BigButton>
      <IconGrid $cols={1} $pitch={26}>
        {["cut", "copy", "brush"].map((n) => (
          <IconButton key={n} aria-label={n}><G n={n} /></IconButton>
        ))}
      </IconGrid>
    </Group>
    <Group name="Orient" w={150} pad={7}>
      <SmallCol $w={75}>
        <SmallButton><G n="home" />Home<Caret $gap={5} /></SmallButton>
        <SmallButton $off><G n="plan" />Plan View</SmallButton>
        <SmallRow>
          <SmallButton aria-label="Display style"><G n="blueBlock" /><Caret $gap={5} /></SmallButton>
          <SmallButton aria-label="Snap view"><G n="snap" /></SmallButton>
        </SmallRow>
      </SmallCol>
      <SmallCol $w={66}>
        <SmallButton><G n="spin" />Spin<Caret $gap={5} /></SmallButton>
        <SmallButton><G n="hand" />Pan</SmallButton>
        <SmallButton><G n="lens" />Zoom<Caret $gap={5} /></SmallButton>
      </SmallCol>
    </Group>
    <Group name="Sketch" w={182} pad={3}>
      <IconGrid $cols={7} $pitch={25}>
        {sketchTools.map((n) => (
          <IconButton key={n} aria-label={n}><G n={n} /></IconButton>
        ))}
      </IconGrid>
    </Group>
    <Group name="Mode" w={40} pad={8}>
      <IconGrid $cols={1} $pitch={24}>
        {["gridPen", "hatchBlock", "greenBlock"].map((n) => (
          <IconButton key={n} aria-label={n} $on={n === "greenBlock"}><G n={n} /></IconButton>
        ))}
      </IconGrid>
    </Group>
    <Group name="Edit" w={172} pad={3}>
      <BigButton $w={42}>
        <G32 n="select" />
        <BigText>Select</BigText>
        <Caret />
      </BigButton>
      <BigButton $w={41}><G32 n="pull" /><BigText>Pull</BigText></BigButton>
      <BigButton $w={41}><G32 n="move" /><BigText>Move</BigText></BigButton>
      <BigButton $w={40} $on><G32 n="fill" /><BigText>Fill</BigText></BigButton>
    </Group>
    <Group name="Intersect" w={137}>
      <BigButton $w={60}><G32 n="combine" /><BigText>Combine</BigText></BigButton>
      <SmallCol $w={76}>
        <SmallButton><G n="splitBody" />Split Body</SmallButton>
        <SmallButton><G n="splitFace" />Split Face</SmallButton>
        <SmallButton><G n="projectTo" />Project</SmallButton>
      </SmallCol>
    </Group>
    <Group name="Insert" w={222} pad={1}>
      <IconGrid $cols={2} $pitch={29}>
        {insertTools.map((n) => (
          <IconButton key={n} aria-label={n}><G n={n} /></IconButton>
        ))}
      </IconGrid>
      <BigButton $w={44}><G32 n="insertFile" /><BigText>File</BigText></BigButton>
      <BigButton $w={40}><G32 n="pcb" /><BigText>Import<br />PCB</BigText></BigButton>
      <BigButton $w={76}><ThreeD>3D</ThreeD><BigText>Download 3D<br />Models</BigText></BigButton>
    </Group>
    <Group name="Output" w={62} pad={2}>
      <BigButton $w={58}><G32 n="exportOut" /><BigText>Export<br />Options<Caret $gap={1} /></BigText></BigButton>
    </Group>
    <Group name="Investigate" w={102} pad={6}>
      <IconGrid $cols={1} $pitch={28} $row={31}>
        <IconButton aria-label="Measure mass"><G n="caliper" s={24} /></IconButton>
        <IconButton aria-label="Measure"><G n="measure" s={20} /></IconButton>
      </IconGrid>
      <BigButton $w={66}><G32 n="bill" /><BigText>Bill Of<br />Materials<Caret $gap={1} /></BigText></BigButton>
    </Group>
    <Group name="Order" w={48} pad={1}>
      <BigButton $w={46}><G32 n="cart" /><BigText>BOM<br />Quote</BigText></BigButton>
    </Group>
  </RibbonBar>
);

/* ---------- 3D model ---------- */

const stops = (list: [number, string][]) => list.map(([o, c]) => <stop key={o} offset={o} stopColor={c} />);
const tubeStops = (top: string) =>
  stops([[0, top], [0.1, "#9ec19e"], [0.26, "#c6eac6"], [0.42, "#a9cfa9"], [0.68, "#9fc29f"], [0.88, "#88a788"], [1, "#789178"]]);
const EDGE = "#1c2c1c";
const WEDGE = "M507 465 580 483 1640 741V748L1490 718 580 532 498 512z";

const Model = () => (
  <Scene viewBox="245 150 1661 937" preserveAspectRatio="xMidYMid meet" fill="none">
    <defs>
      <linearGradient id="upper" gradientUnits="userSpaceOnUse" x1="580" y1="421.700" x2="566" y2="479">{tubeStops("#8aa98a")}</linearGradient>
      <linearGradient id="lower" gradientUnits="userSpaceOnUse" x1="580" y1="527" x2="568" y2="587">{tubeStops("#92b292")}</linearGradient>
      <linearGradient id="middle" gradientUnits="userSpaceOnUse" x1="580" y1="480" x2="569" y2="526">
        {stops([[0, "#94b494"], [0.22, "#c8ecc8"], [0.45, "#abd0ab"], [1, "#9bbd9b"]])}
      </linearGradient>
      <linearGradient id="wedgeFade" gradientUnits="userSpaceOnUse" x1="900" y1="0" x2="1400" y2="0">
        <stop offset="0" stopColor="#8fae8f" stopOpacity="0" />
        <stop offset="1" stopColor="#8fae8f" />
      </linearGradient>
      <linearGradient id="flare" gradientUnits="userSpaceOnUse" x1="1780" y1="700" x2="1750" y2="845">
        {stops([[0, "#86a486"], [0.12, "#9fc39f"], [0.25, "#c6ebc6"], [0.4, "#aad0aa"], [0.75, "#9abd9a"], [1, "#738d73"]])}
      </linearGradient>
      <linearGradient id="dome" gradientUnits="userSpaceOnUse" x1="448" y1="375" x2="405" y2="568">
        {stops([[0, "#90b090"], [0.3, "#a9cea9"], [0.6, "#9cbf9c"], [0.85, "#88a688"], [1, "#708a70"]])}
      </linearGradient>
      <linearGradient id="domeSide" gradientUnits="userSpaceOnUse" x1="440" y1="470" x2="508" y2="486">
        {stops([[0, "rgba(100,128,100,0)"], [0.6, "rgba(100,128,100,.15)"], [1, "rgba(92,116,92,.75)"]])}
      </linearGradient>
      <radialGradient id="glow">
        <stop offset="0" stopColor="#cdf3cd" />
        <stop offset="1" stopColor="#cdf3cd" stopOpacity="0" />
      </radialGradient>
    </defs>

    <path d={WEDGE} fill="url(#middle)" />
    <path d={WEDGE} fill="url(#wedgeFade)" />
    <path d="M425 374C440 376 458 384 470 394L506 464.500C508 480 504 498 498 512L442 561C426 567 403 567 384 563z" fill="url(#dome)" />
    <path d="M425 374C440 376 458 384 470 394L506 464.500C508 480 504 498 498 512L442 561C426 567 403 567 384 563z" fill="url(#domeSide)" />
    <ellipse cx="434" cy="421" rx="18" ry="22" fill="url(#glow)" opacity=".8" />
    <ellipse cx="448" cy="504" rx="28" ry="24" fill="url(#glow)" opacity=".5" />
    <path d="M470 394 457 391.500C454 392 455 397 461 403C472 416 493 448 506 465L580 483.500 1500 710 1600 737 1640 743 1703 702 1683 695.500z" fill="url(#upper)" />
    <path d="M498 511.500 488 512 457 530 425 547C418 552 420 557 434 560L442 561.500 1600 794 1660 806 1683 805 1640 743 1490 711 580 527z" fill="url(#lower)" />
    <path d="M1640 743C1660 733 1680 714 1703 703L1695 757 1681 806C1665 788 1654 762 1640 743z" fill="#a6cba6" />
    <ellipse cx="1660" cy="758" rx="7" ry="13" fill="url(#glow)" opacity=".6" />
    <path d="M1683 695C1700 698 1735 697 1758 699.500 1772 701 1782 702 1790 704.500L1822 711.500C1824 745 1811 806 1790 852L1760 844.500C1748 842 1738 839 1728 835L1677 814C1668 811 1662 808 1657 805L1681 806C1696 757 1703 730 1703 703z" fill="url(#flare)" />
    <ellipse cx="404.700" cy="468.500" rx="14" ry="96.400" transform="rotate(12.400 404.700 468.500)" fill="#8fae8f" stroke={EDGE} />
    <g stroke={EDGE} strokeLinejoin="round">
      <path d="M353 408.500 359 407.500 417.500 420 398 514.500 393 516.500 333.500 503.500z" fill="#86a486" />
      <path d="M359 407.500 417.500 420 398 514.500 339.500 502z" fill="#a4c8a4" />
      <path d="M333.500 503.500 339.500 502" />
    </g>
    <g stroke={EDGE}>
      <path d="M469 394C460 391 454 390 455.500 395 457 401 470 413 487 437 496 450 500 458 506 465" />
      <path d="M434 560.500C421 557 417 552 425 546.500 432 542 446 536 457 530L480 517C486 513 490 511.500 498 511.500" />
      <path d="M1490 711.500 1560 726 1640 743C1652 736 1670 721 1682 713L1703 703" />
      <path d="M1640 743C1650 756 1658 773 1665 783L1681 806" />
      <path d="M1683 695.500C1691 697 1697 700 1703 703V697.500M1659 806C1666 808 1674 806 1681 806" />
      <path d="M1703 697.500C1704 715 1699 735 1695 757 1692 770 1686 798 1677 814" />
      <path d="M1758.500 700C1762 725 1755 750 1752 767 1747 790 1737 821 1728.500 835" />
      <path d="M1790.500 704.500C1792 730 1788 745 1784 763 1778 790 1771 823 1760 844.500" />
      <path d="M1822 711.500C1824 745 1811 806 1790 852" />
    </g>
    <path d="M507 491.500 1490 711.500" stroke="#e2f2e2" strokeWidth="2" />
    <path d="M245 433 344 455M507 491.500 1490 711.500M1812 783 1904 803.500" stroke="#333" strokeDasharray="18 4 4 4" />
    <path d="M344 455 507 491.500M1640 745 1752 770" stroke="#c2d0c2" strokeDasharray="18 3 4 3" />

    <path d="M1805 781 1812 745" stroke="#e0504a" strokeWidth="2.500" />
    <path d="M1814.500 733 1815 752 1807.500 751z" fill="#ff0c0c" />
    <path d="M1803 781 1776 775" stroke="#7f9fe8" strokeWidth="2.500" />
    <path d="M1758 771 1776 772 1775 778z" fill="#3f6bf0" />
    <circle cx="1801" cy="782.500" r="3.500" fill="#0f8a1f" />
    <circle cx="1805" cy="781.500" r="3" fill="#8a9a8a" />
    <g fontFamily="Liberation Sans, Arial, sans-serif" fontWeight="700" fontSize="12">
      <text x="1813" y="727" fill="#dc4a40">X</text>
      <text x="1743" y="773" fill="#4058c8">Z</text>
      <text x="306" y="997" fill="#f0302c">X</text>
      <text x="260" y="1026" fill="#4444ff">Z</text>
    </g>

    <circle cx="304" cy="1020" r="3.500" fill="#f01818" />
    <circle cx="300" cy="1039" r="3.500" fill="#f01818" />
    <circle cx="293" cy="1027" r="4" fill="#1010e8" />
    <circle cx="313" cy="1032" r="3" fill="#1010e8" />
    <path d="M296 1016.500 316 1021.500 311.500 1041.500 291.500 1036.500z" fill="#e6f8fa" stroke="#9caab8" />
    <circle cx="303.500" cy="1029" r="4.500" fill="#0a8c14" />
    <path d="m306 1013 2-9" stroke="#f01818" strokeWidth="1.500" />
    <path d="M308.500 999 310 1009 304.500 1008z" fill="#f01818" />
    <path d="m285 1026-6-1.500" stroke="#1010c8" strokeWidth="1.500" />
    <path d="M271 1022.500 283 1021.500 280 1027z" fill="#1010c8" />
  </Scene>
);

/* ---------- taskbar ---------- */

const TaskIcons = () => (
  <Svg width="800" height="8" viewBox="0 0 800 8" aria-hidden="true">
    <path d="M0 0h490v8H0z" fill="#a05c40" opacity=".45" />
    <path d="M30 8 46 6v2z" fill="#ddd" />
    <path d="M78 8c4-4 16-4 20 0z" fill="#4ab0e0" />
    <path d="M146 8c4-3 12-5 18-4l-2 4z" fill="#f0c030" />
    <path d="M199 6h14v2h-14zM321 6h30v2h-30z" fill="#c8b090" />
    <path d="M259 4h32v4h-32z" fill="#6a2a90" />
    <path d="M445 6h12v2h-12zM464 6h12v2h-12z" fill="#b02838" />
    <path d="M513 8c4-5 14-5 19 0z" fill="#4a4a4a" />
    <path d="M584 5h12v3h-12z" fill="#e8e8f0" stroke="#111" />
    <path d="M618.500 9V1.500h58V9" fill="#ad8273" stroke="#d8c0b8" />
    <path d="M633 8c3-4 17-4 21 0z" fill="#20a8e0" />
    <path d="M680.500 9V1.500h57V9" fill="#c4a498" stroke="#f4ece8" />
    <path d="M693 4h32v4h-32z" fill="#fff" />
  </Svg>
);

export default function App() {
  return (
    <Desktop>
      <Global />
      <Screen>
        <LeftEdge />
        <AppWindow>
          <TitleBar>
            <QuickAccess>
              <Slot $w={22} aria-label="DesignSpark"><G n="logo" s={14} /></Slot>
              <QuickRule />
              <Slot $w={18} aria-label="Open"><G n="open" /></Slot>
              <Slot $w={32} aria-label="Save"><G n="save" s={14} /></Slot>
              <Slot $w={17} aria-label="Undo"><G n="undo" s={14} /></Slot>
              <Slot $w={18} aria-label="Undo list"><Caret $tone="#555" /></Slot>
              <Slot $w={18} aria-label="Redo"><G n="redo" s={14} /></Slot>
              <Slot $w={18} aria-label="Redo list"><Caret $tone="#999" /></Slot>
              <Slot $w={20} aria-label="Save as"><G n="saveAs" /></Slot>
              <Slot $w={28} aria-label="Save list"><Caret $tone="#555" /></Slot>
              <Slot $w={22} aria-label="Export STL"><G n="stl" /></Slot>
              <Slot $w={30} aria-label="Customise"><Caret $tone="#444" /></Slot>
            </QuickAccess>
            <Title>Martian lower thigh - DesignSpark Mechanical</Title>
            <WindowButtons>
              <Slot $w={26} aria-label="Minimise"><G n="minimise" /></Slot>
              <Slot $w={26} aria-label="Restore"><G n="restore" s={14} /></Slot>
              <Slot $w={27} aria-label="Close"><G n="close" /></Slot>
            </WindowButtons>
          </TitleBar>
          <TabRow>
            <FileTab>File</FileTab>
            <Tab $on>Design</Tab>
            <Tab>Display</Tab>
            <Tab>Help / Resources</Tab>
            <Grow />
            <Slot $w={27} aria-label="Collapse ribbon"><G n="fold" s={14} /></Slot>
            <Slot $w={26} aria-label="Help"><G n="help" /></Slot>
          </TabRow>
          <Ribbon />
          <Body>
            <Side>
              <Panel $line="#ececf0">
                <PanelHead $line="#ececf0">
                  <PanelTitle>Structure</PanelTitle>
                  <G n="pin" />
                </PanelHead>
                <Tree>
                  <TreeRow $indent={7} $bold>
                    <Twisty><G n="twistOpen" s={13} /></Twisty>
                    <TreeLabel><Check $soft defaultChecked /><G n="docTree" /><TreeName>Martian lower thigh</TreeName></TreeLabel>
                  </TreeRow>
                  <TreeRow $indent={41}>
                    <TreeLabel><Check defaultChecked /><G n="greenBlock" /><TreeName>Solid</TreeName></TreeLabel>
                  </TreeRow>
                  <TreeRow $indent={26}>
                    <Twisty><G n="twistShut" s={13} /></Twisty>
                    <TreeLabel><Check /><G n="ghostStep" /><TreeName>Shin</TreeName></TreeLabel>
                  </TreeRow>
                  <TreeRow $indent={41}>
                    <TreeLabel><Check defaultChecked /><G n="axisDots" /><TreeName>Axis</TreeName></TreeLabel>
                  </TreeRow>
                </Tree>
              </Panel>
              <PanelTabs $gap>
                <PanelTab $on>Structure</PanelTab>
                <PanelTab>Layers</PanelTab>
                <PanelTab>Selection</PanelTab>
              </PanelTabs>
              <Panel $line={LINE} $grow>
                <PanelHead $line={LINE}>
                  <PanelTitle>Options - Fill</PanelTitle>
                  <G n="pin" />
                </PanelHead>
                <Options>
                  <OptionHead>
                    <OptionName><G n="gear" />General</OptionName>
                    <Slot $w={16} aria-label="Collapse"><G n="collapse" /></Slot>
                  </OptionHead>
                  <OptionList>
                    <OptionRow $indent={5} $strong><Check />Patch blend</OptionRow>
                    <OptionRow $indent={21}><Check $soft disabled />Show deviation</OptionRow>
                    <OptionRow $indent={36} as="div">
                      Color:
                      <Swatch aria-label="Color" />
                      <Caret $tone="#777" />
                    </OptionRow>
                    <OptionRow $indent={36}>
                      Scale:&nbsp; 0
                      <Ramp />
                      <ScaleBox type="text" />
                    </OptionRow>
                  </OptionList>
                </Options>
              </Panel>
              <PanelTabs>
                <PanelTab $on>Options - Fill</PanelTab>
                <PanelTab>Properties</PanelTab>
              </PanelTabs>
            </Side>
            <Work>
              <Frame>
                <Viewport>
                  <Model />
                  <Overlay>
                    <Hint>Select faces or edges to try to remove them. Select a closed loop of lines to create a patch</Hint>
                    <ToolButton $big aria-label="Select"><Icon s={38} box={38}>{glyph.bigCursor}</Icon></ToolButton>
                    <ToolButton aria-label="Guide curve"><Icon s={26} box={28}>{glyph.guide}</Icon></ToolButton>
                    <ToolButton $faint aria-label="Complete"><Icon s={28} box={28}>{glyph.tick}</Icon></ToolButton>
                  </Overlay>
                </Viewport>
                <VScroll>
                  <G n="chevU" s={12} />
                  <ScrollEnd><G n="chevD" s={12} /><Nub /></ScrollEnd>
                </VScroll>
                <HScroll>
                  <ScrollEnd $row><Nub $tall /><G n="chevL" s={12} /></ScrollEnd>
                  <G n="chevR" s={12} />
                </HScroll>
                <Corner />
              </Frame>
              <DocTabs>
                <DocTab $w={93}><G n="logo" />Start Page</DocTab>
                <DocTab $w={135} $on><G n="doc" />Martian lower thigh<G n="closeTab" s={10} /></DocTab>
                <Grow />
                <Slot $w={14} aria-label="Previous tab"><G n="left" s={13} /></Slot>
                <Slot $w={14} aria-label="Next tab"><G n="right" s={13} /></Slot>
                <Slot $w={14} aria-label="Close tab"><G n="closeSmall" s={12} /></Slot>
              </DocTabs>
            </Work>
          </Body>
          <StatusBar>
            <StatusText>Select faces or edges to try to remove them. Select a closed loop of lines to create a patch</StatusText>
            <StatusRule $after={4} />
            <Slot $w={24} aria-label="Stop"><G n="stop" /></Slot>
            <Slot $w={26} aria-label="Messages"><G n="info" /></Slot>
            <Slot $w={14} aria-label="Message list"><Caret $up $tone="#16305c" /></Slot>
            <StatusRule $after={52} />
            <StatusRule $short $after={100} />
            <Slot $w={16} aria-label="Step"><G n="spinner" s={18} /></Slot>
            <Slot $w={23} aria-label="Turn"><G n="turn" /></Slot>
            <Slot $w={26} aria-label="Pointer"><G n="cursor" /></Slot>
            <Slot $w={10} aria-label="Pointer list"><Caret $up $tone="#fff" /></Slot>
            <Slot $w={26} aria-label="Marquee"><G n="marquee" /></Slot>
            <Slot $w={12} aria-label="Marquee list"><Caret $up $tone="#fff" /></Slot>
            <StatusRule />
            <Slot $w={30} aria-label="Spin"><G n="planetDim" /></Slot>
            <Slot $w={8} aria-label="Spin list"><Caret $up $tone="#fff" /></Slot>
            <Slot $w={30} aria-label="Pan"><G n="hand" /></Slot>
            <Slot $w={18} aria-label="Zoom"><G n="lens" /></Slot>
            <Slot $w={16} aria-label="Zoom list"><Caret $up $tone="#fff" /></Slot>
            <Slot $w={24} aria-label="Previous view"><G n="arrowSW" /></Slot>
            <Slot $w={28} aria-label="Next view"><G n="arrowNE" /></Slot>
            <Balloon role="status">
              <BalloonHead>
                <G n="info" />
                <b>Information</b>
                <CloseBox aria-label="Close message"><G n="closeTan" s={12} /></CloseBox>
              </BalloonHead>
              <BalloonText>STL Out: Fine Quality, 1 File,<br />1 Body, 13248 Facets</BalloonText>
              <BalloonTail />
            </Balloon>
          </StatusBar>
        </AppWindow>
        <RightEdge />
      </Screen>
      <Taskbar><TaskIcons /></Taskbar>
    </Desktop>
  );
}
